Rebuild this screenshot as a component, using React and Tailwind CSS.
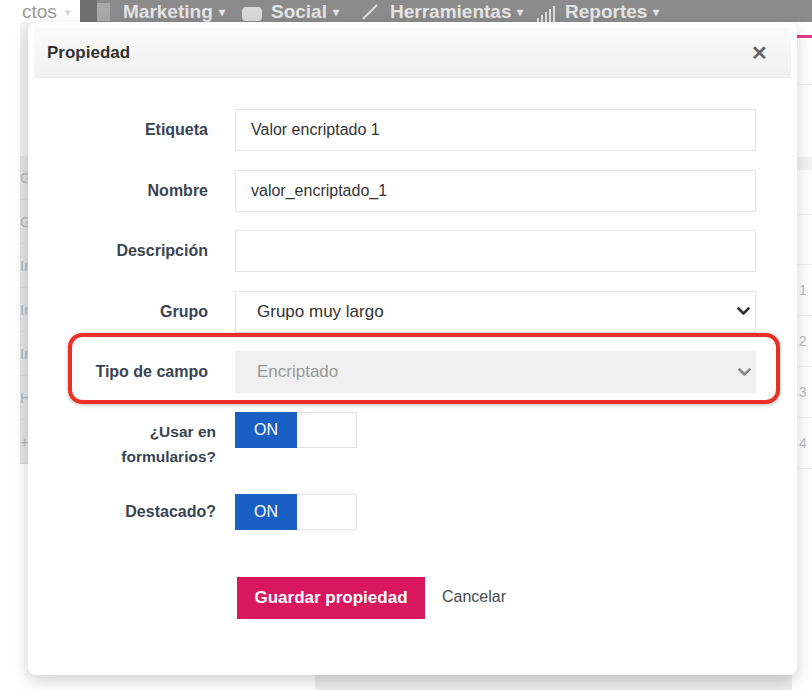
import React from 'react';

const Chevron = ({ color = '#333' }) => (
  <svg width="13" height="9" viewBox="0 0 13 9" fill="none">
    <path d="M1.5 1.5 L6.5 6.5 L11.5 1.5" stroke={color} strokeWidth="2.6" strokeLinecap="round" strokeLinejoin="round" />
  </svg>
);

const Toggle = () => (
  <div className="flex w-[122px] h-[36px] border border-[#e2e2e2] bg-white">
    <div className="w-[62px] -my-px -ml-px bg-[#1a5fc4] text-white text-[16px] flex items-center justify-center">ON</div>
  </div>
);

const TextRow = ({ label, value }) => (
  <div className="flex items-center">
    <div className="w-[180px] text-right font-bold text-[16px] text-[#3a4451]">{label}</div>
    <div className="ml-[27px] flex-1 h-[42px] border border-[#e6e6e6] bg-white flex items-center pl-[15px] text-[16px] text-[#333]">
      {value}
    </div>
  </div>
);

export default function App() {
  const sideLetters = ['G', 'G', 'Ir', 'Ir', 'Ir', 'H', '+'];

  return (
    <div className="relative w-[812px] h-[690px] overflow-hidden bg-white font-['Liberation_Sans',Arial,sans-serif]">
      {/* page behind the dialog */}
      <div className="flex flex-col h-full">
        <div className="flex h-[22px] items-end overflow-hidden text-[19px] leading-[20px]">
          <div className="w-[80px] h-full flex items-end pl-[22px] text-[#9a9a9a]">
            ctos <span className="ml-[8px] text-[#d0d0d0] text-[11px]">▾</span>
          </div>
          <div className="flex-1 h-full bg-[#8b8b8b] flex items-end font-bold text-[#e4e4e4]">
            <div className="w-[17px] h-full bg-[#707070]" />
            <div className="w-[13px] h-[18px] bg-[#a8a8a8] mb-[1px]" />
            <div className="ml-[13px] w-[119px] flex items-end">
              Marketing <span className="ml-[6px] text-[12px]">▾</span>
            </div>
            <div className="w-[20px] h-[14px] rounded-sm bg-[#dadada] mb-[1px]" />
            <div className="ml-[9px] w-[91px] flex items-end">
              Social <span className="ml-[6px] text-[12px]">▾</span>
            </div>
            <div className="w-[15px] h-full flex items-end justify-center">
              <div className="w-[2px] h-[20px] rotate-45 bg-[#dcdcdc]" />
            </div>
            <div className="ml-[13px] w-[143px] flex items-end">
              Herramientas <span className="ml-[6px] text-[12px]">▾</span>
            </div>
            <div className="w-[32px] flex items-end gap-[2px] pl-[4px]">
              <div className="w-[2px] h-[4px] bg-[#ddd]" />
              <div className="w-[2px] h-[7px] bg-[#ddd]" />
              <div className="w-[2px] h-[10px] bg-[#ddd]" />
              <div className="w-[2px] h-[13px] bg-[#ddd]" />
              <div className="w-[2px] h-[16px] bg-[#ddd]" />
            </div>
            <div className="flex items-end">
              Reportes <span className="ml-[6px] text-[12px]">▾</span>
            </div>
          </div>
        </div>
        <div className="flex flex-1">
          <div className="w-[20px]" />
          <div className="w-[14px] flex flex-col">
            <div className="h-[134px] bg-[#f2f2f2]" />
            <div className="bg-[#e4e4e4] flex flex-col text-[15px] text-[#b5b5b5] leading-[43px]">
              {sideLetters.map((l, i) => (
                <div key={i} className="border-b border-[#dadada]">{l}</div>
              ))}
            </div>
          </div>
          <div className="flex-1 flex flex-col justify-end">
            <div className="h-[15px] ml-[281px] bg-[#ececec]" />
          </div>
          <div className="w-[20px] flex flex-col text-[14px] text-[#bbb] bg-white">
            <div className="h-[16px] border-b-[3px] border-[#e33a8a]" />
            <div className="h-[47px] border-b border-[#eee]" />
            <div className="h-[72px]" />
            <div className="h-[13px] bg-[#f3f3f3]" />
            <div className="h-[45px] border-b border-[#eee]" />
            <div className="h-[50px] border-b border-[#eee]" />
            {['1', '2', '3', '4'].map((n) => (
              <div key={n} className="h-[51px] pl-[7px] flex items-center border-b border-[#eee]">{n}</div>
            ))}
          </div>
        </div>
      </div>

      {/* dialog */}
      <div className="absolute left-[28px] top-[22px] w-[769px] h-[653px] bg-white rounded-lg shadow-[0_6px_16px_rgba(0,0,0,0.18)] flex flex-col">
        <div className="mx-[6px] mt-[6px] h-[50px] bg-gradient-to-b from-[#fafafa] to-[#f1f1f1] border-b border-[#ececec] flex items-center justify-between pl-[13px] pr-[23px]">
          <span className="font-bold text-[17px] text-[#333]">Propiedad</span>
          <span className="font-bold text-[20px] text-[#666]">✕</span>
        </div>

        <div className="flex flex-col gap-[18.5px] pt-[31px] pr-[41px]">
          <TextRow label="Etiqueta" value="Valor encriptado 1" />
          <TextRow label="Nombre" value="valor_encriptado_1" />
          <TextRow label="Descripción" value="" />

          <div className="flex items-center">
            <div className="w-[180px] text-right font-bold text-[16px] text-[#3a4451]">Grupo</div>
            <div className="ml-[27px] flex-1 h-[42px] border border-[#e6e6e6] bg-white flex items-center justify-between pl-[21px] pr-[5px] text-[17px] text-[#333]">
              <span>Grupo muy largo</span>
              <Chevron />
            </div>
          </div>

          <div className="relative flex items-center">
            <div className="absolute left-[40px] right-[-24px] top-[-18px] bottom-[-11px] border-[4px] border-[#ea2f27] rounded-[14px] shadow-[0_1px_4px_rgba(0,0,0,0.25)]" />
            <div className="w-[180px] text-right font-bold text-[16px] text-[#3a4451]">Tipo de campo</div>
            <div className="ml-[27px] flex-1 h-[42px] bg-[#f0f0f0] flex items-center justify-between pl-[22px] pr-[5px] text-[17px] text-[#9a9a9a]">
              <span>Encriptado</span>
              <Chevron color="#888" />
            </div>
          </div>
        </div>

        <div className="flex items-start mt-[19px]">
          <div className="w-[188px] pt-[7px] text-right font-bold text-[15.5px] leading-[25px] text-[#3a4451]">
            ¿Usar en<br />formularios?
          </div>
          <div className="ml-[19px]">
            <Toggle />
          </div>
        </div>

        <div className="flex items-center mt-[25px]">
          <div className="w-[188px] text-right font-bold text-[16px] text-[#3a4451]">Destacado?</div>
          <div className="ml-[19px]">
            <Toggle />
          </div>
        </div>

        <div className="flex items-center mt-[47px] pl-[209px]">
          <button className="w-[188px] h-[42px] bg-[#d8175f] text-white font-bold text-[17px]">Guardar propiedad</button>
          <span className="ml-[17px] -mt-[3px] text-[16px] text-[#4a4a4a]">Cancelar</span>
        </div>
      </div>
    </div>
  );
}
